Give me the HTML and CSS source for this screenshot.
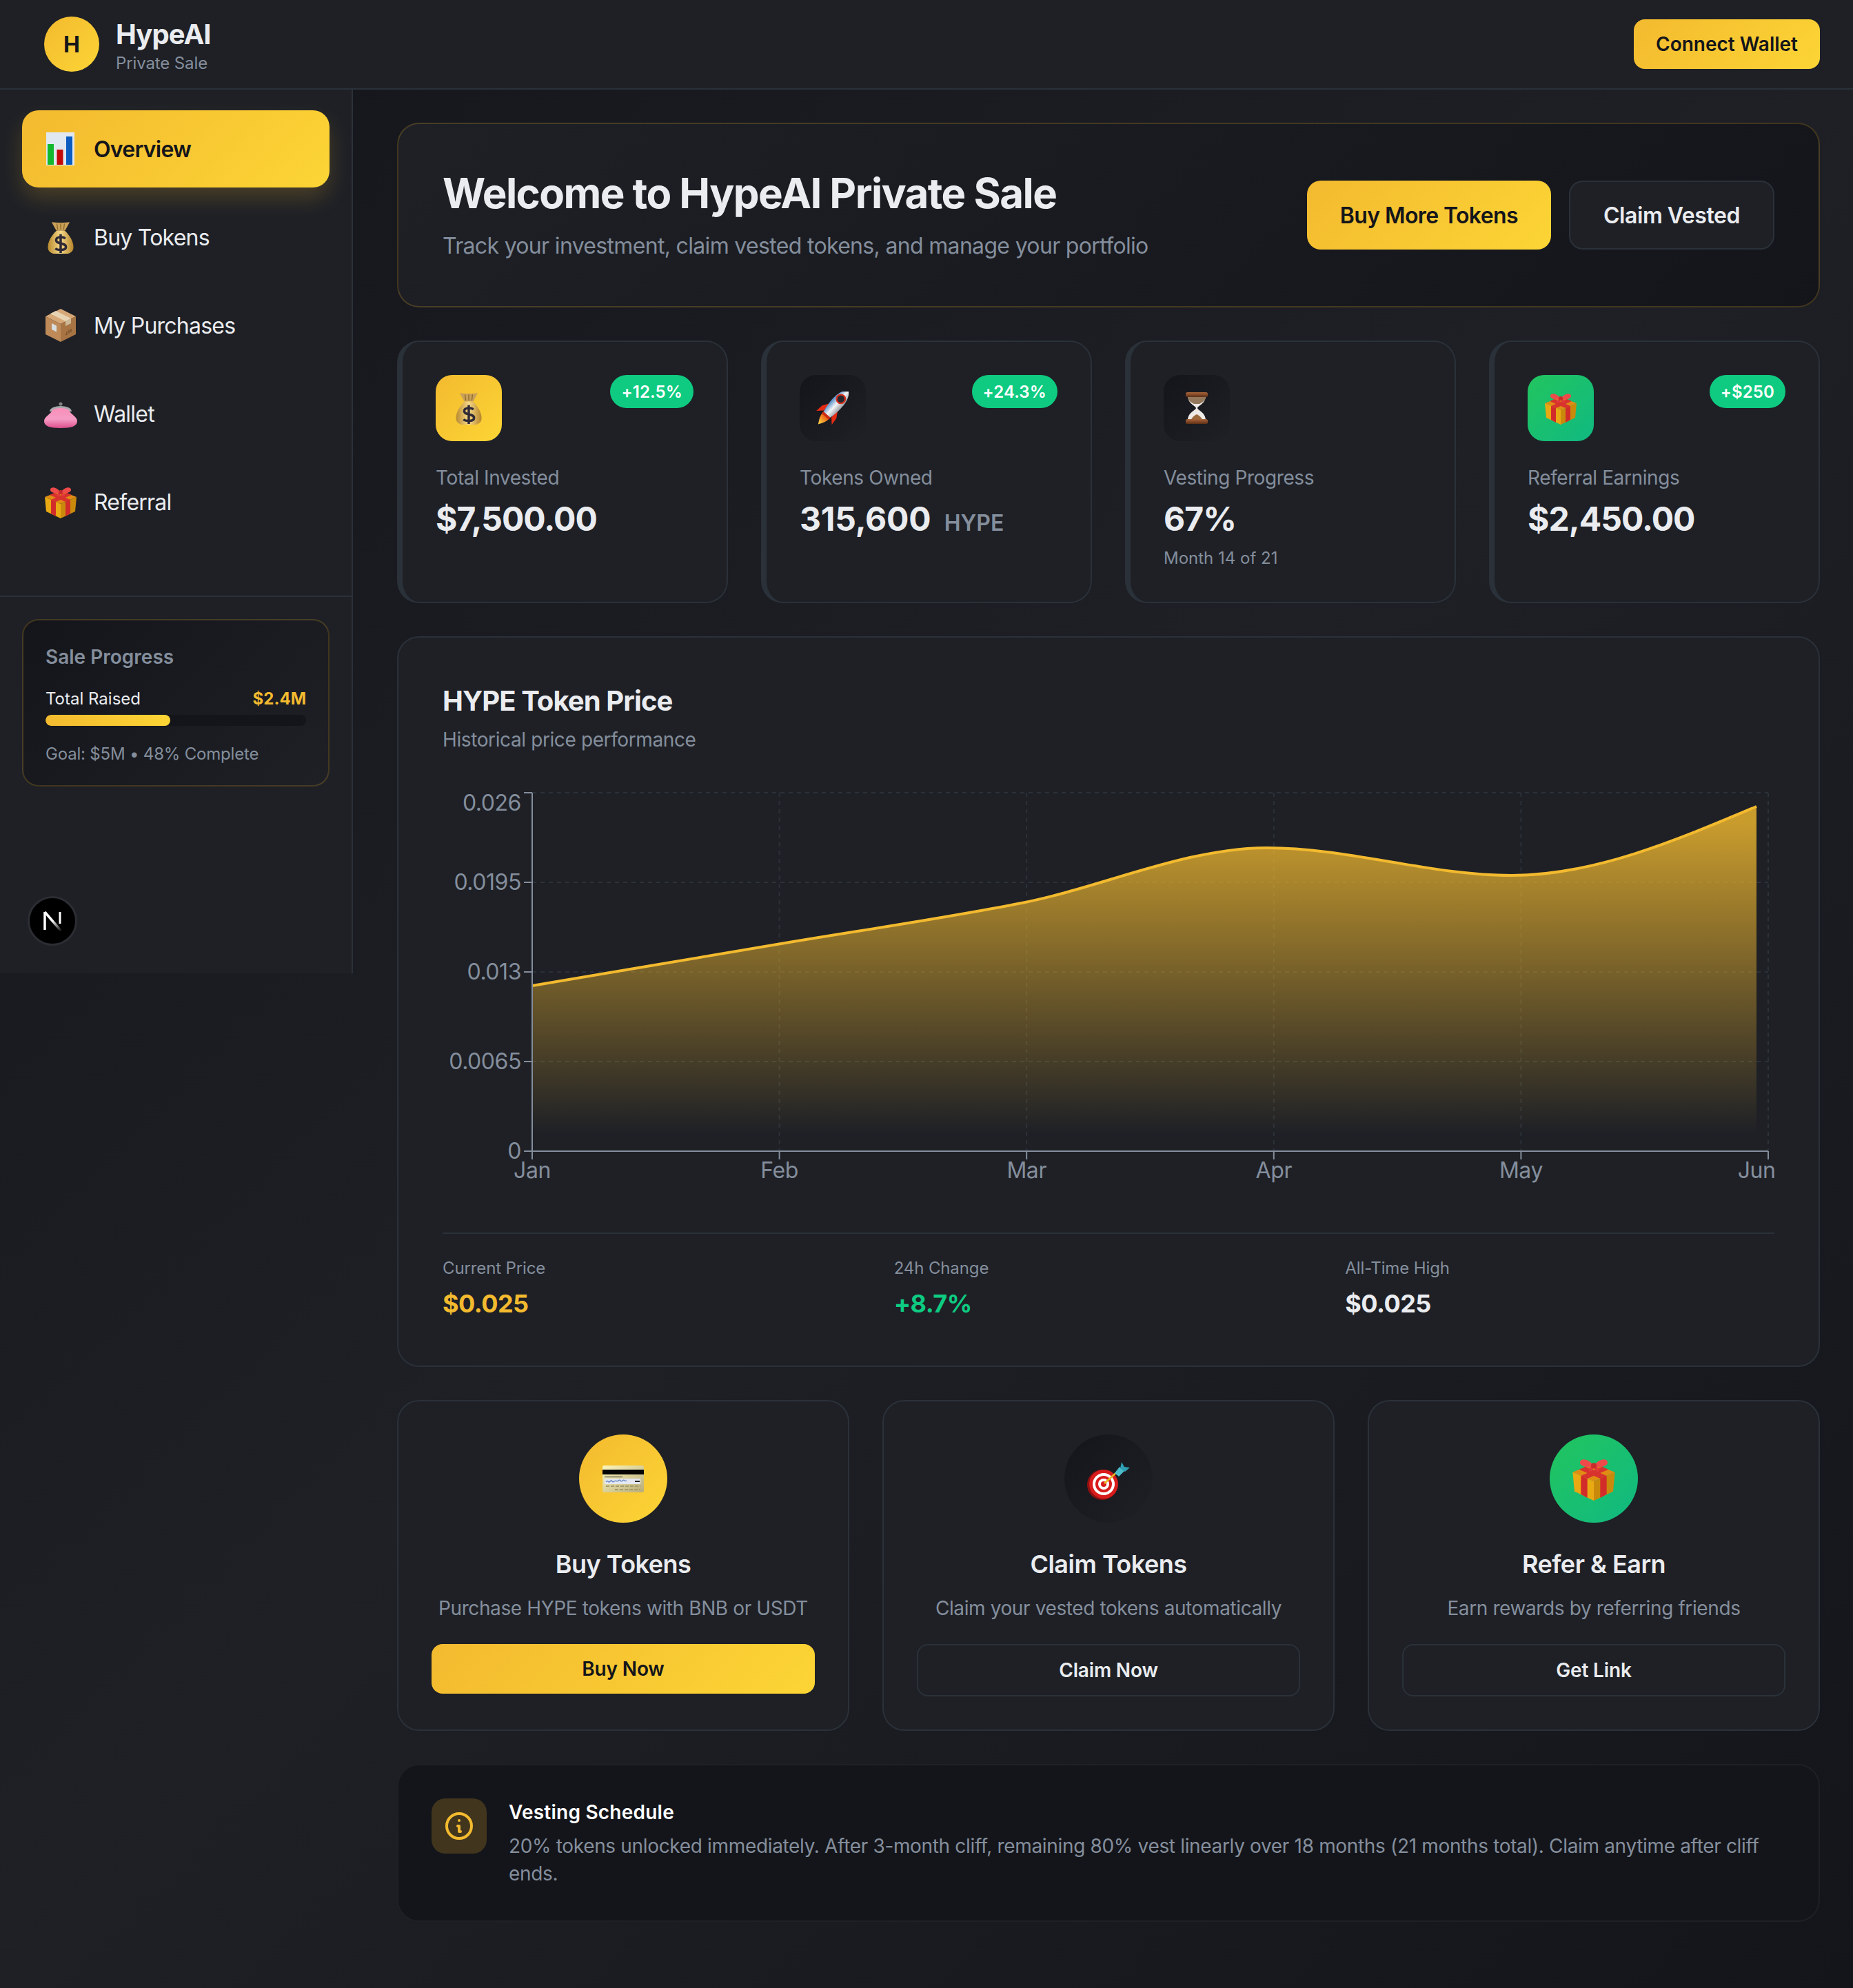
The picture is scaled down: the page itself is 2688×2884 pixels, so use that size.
FILE: index.html
```html
<!DOCTYPE html>
<html lang="en">
<head>
    <meta charset="UTF-8">
    <meta name="viewport" content="width=device-width, initial-scale=1.0">
    <title>HypeAI Private Sale</title>
    <link rel="stylesheet" href="styles.css">
</head>
<body>
    <!-- emoji drawings, reused below -->
    <svg class="defs" width="0" height="0" aria-hidden="true">
        <defs>
            <linearGradient id="bagFill" x1="0" y1="0" x2="1" y2="0">
                <stop offset="0" stop-color="#b98a2e"/>
                <stop offset=".5" stop-color="#f6d888"/>
                <stop offset="1" stop-color="#b5842a"/>
            </linearGradient>
            <linearGradient id="purseFill" x1="0" y1="0" x2="0" y2="1">
                <stop offset="0" stop-color="#f88fbb"/>
                <stop offset=".55" stop-color="#f69cc4"/>
                <stop offset="1" stop-color="#dd4f8e"/>
            </linearGradient>
            <linearGradient id="rocketBody" x1="0" y1="0" x2="1" y2="0">
                <stop offset="0" stop-color="#4f88c4"/>
                <stop offset=".5" stop-color="#f4f6f8"/>
                <stop offset="1" stop-color="#9a9da3"/>
            </linearGradient>
            <linearGradient id="flame" x1="0" y1="0" x2="0" y2="1">
                <stop offset="0" stop-color="#e85a10"/>
                <stop offset="1" stop-color="#ffe14a"/>
            </linearGradient>
            <linearGradient id="woodCap" x1="0" y1="0" x2="0" y2="1">
                <stop offset="0" stop-color="#a9653a"/>
                <stop offset="1" stop-color="#5e2f16"/>
            </linearGradient>
            <linearGradient id="cardFill" x1="0" y1="0" x2="1" y2="1">
                <stop offset="0" stop-color="#fdf6bc"/>
                <stop offset="1" stop-color="#b8ad7a"/>
            </linearGradient>
            <linearGradient id="nFade" gradientUnits="userSpaceOnUse" x1="7" y1="5" x2="31" y2="33">
                <stop offset=".45" stop-color="#fff"/>
                <stop offset="1" stop-color="#fff" stop-opacity="0"/>
            </linearGradient>
            <symbol id="e-chart" viewBox="0 0 48 48">
                <rect x="3" y="0" width="41" height="48" fill="#dfe8f0"/>
                <rect x="5" y="17" width="9" height="30" fill="#12b82e"/>
                <rect x="18.500" y="25" width="9" height="22" fill="#c40808"/>
                <rect x="32" y="6" width="9" height="41" fill="#0a5cc0"/>
            </symbol>
            <symbol id="e-bag" viewBox="2 1 44 44">
                <path d="M19 14C12 20 7 29 7 36c0 8 7 10 17 10s17-2 17-10c0-7-5-16-12-22z" fill="url(#bagFill)"/>
                <path d="M12 3c5 1 19 1 24 0l-6 11H18z" fill="#c9a058"/>
                <path d="M19 5l1 8M24 5v8M29 5l-1 8" stroke="#8d6a2c" stroke-width="1.200" fill="none"/>
                <path d="M30 25c-2-3-12-3-12 2 0 6 13 3 13 9 0 5-11 5-14 2M24 19v25" stroke="#2f2a36" stroke-width="3.200" fill="none"/>
            </symbol>
            <symbol id="e-box" viewBox="0 0 48 48">
                <path d="M24 0l22 11-22 11L2 11z" fill="#d6a878"/>
                <path d="M2 11l22 11v26L2 37z" fill="#bd8a58"/>
                <path d="M46 11L24 22v26l22-11z" fill="#a87444"/>
                <path d="M9 7l8-4 22 11-8 4z" fill="#e8d4b4"/>
                <path d="M31 18l8-4v7l-8 4z" fill="#cdb898"/>
                <path d="M11 21l7 3.500v9L11 30z" fill="#d8dde0"/>
                <path d="M31 38l2-1v-4M36 35.500v-5M39 34v-5" stroke="#6e4a28" stroke-width="1.200" fill="none"/>
            </symbol>
            <symbol id="e-purse" viewBox="0 0 48 48">
                <path d="M10 21c0-8 28-8 28 0" stroke="#a8a8aa" stroke-width="4" fill="none"/>
                <circle cx="24" cy="10" r="2.600" fill="#80807f"/>
                <path d="M12 19c4-4 20-4 24 0 2 6 12 9 12 16 0 7-8 10-24 10S0 42 0 35c0-7 10-10 12-16z" fill="url(#purseFill)"/>
            </symbol>
            <symbol id="e-gift" viewBox="0 0 48 48">
                <path d="M24 8l23 9-23 10L1 17z" fill="#e08c14"/>
                <path d="M1 17l23 10v21L3 38z" fill="#e9a912"/>
                <path d="M47 17L24 27v21l21-10z" fill="#c98a0c"/>
                <path d="M8 14l23 10 7-3L15 11zM33 11L10 21l7 3 23-10z" fill="#d8322e"/>
                <path d="M10 21l7 3v21l-7-4zM38 21l-7 3v21l7-4z" fill="#d22c2a"/>
                <path d="M24 10C19 3 10 1 9 6c-1 4 8 7 15 5 7 2 16-1 15-5-1-5-10-3-15 4z" fill="#ee4a4a"/>
                <path d="M24 10l-5 6M24 10l5 6" stroke="#e03a3a" stroke-width="3.500"/>
                <circle cx="24" cy="10" r="3" fill="#c92a2a"/>
            </symbol>
            <symbol id="e-rocket" viewBox="5 5 38 38" overflow="visible">
                <g transform="rotate(42 24 24)">
                    <path d="M13 30l5-8v11l-6 6zM35 30l-5-8v11l6 6z" fill="#e52a12"/>
                    <path d="M19 36c0 6 3 9 5 13 2-4 5-7 5-13z" fill="url(#flame)"/>
                    <path d="M24-3c7 5 8 16 7 26-.3 4-1 8-2 12H19c-1-4-1.700-8-2-12-1-10 0-21 7-26z" fill="url(#rocketBody)"/>
                    <circle cx="24" cy="10" r="5" fill="#26282e" stroke="#d8301f" stroke-width="1.800"/>
                    <path d="M18.500 34h11v3h-11z" fill="#cc2a14"/>
                </g>
            </symbol>
            <symbol id="e-glass" viewBox="0 0 48 48">
                <path d="M11 6c0 12 11 14 12 18-1 4-12 6-12 18h26c0-12-11-14-12-18 1-4 12-6 12-18z" fill="#eeebe7"/>
                <path d="M11 7c0 7 6 9 9 11h8c3-2 9-4 9-11z" fill="#93785c"/>
                <path d="M15 42c3-6 7-8 9-9 2 1 6 3 9 9z" fill="#9c6a3c"/>
                <rect x="8" y="1" width="32" height="7" rx="2.500" fill="url(#woodCap)"/>
                <rect x="8" y="40" width="32" height="7" rx="2.500" fill="url(#woodCap)"/>
            </symbol>
            <symbol id="e-card" viewBox="0 0 64 64">
                <rect x="2" y="13" width="60" height="39" rx="2.500" fill="url(#cardFill)"/>
                <rect x="2" y="19" width="60" height="7" fill="#050505"/>
                <rect x="5" y="32" width="52" height="8" fill="#e4e7f0"/>
                <path d="M7 37c3-5 3 3 6-1s2 3 6 0 3 2 6-1 3 3 6 0 3 2 6 0" stroke="#5f84c4" stroke-width="1.300" fill="none"/>
                <rect x="5" y="29" width="26" height="1.200" fill="#5a5a50"/>
                <rect x="49" y="35" width="7" height="2" fill="#222"/>
                <path d="M7 43h50M20 48h37" stroke="#a59b6c" stroke-width="2" stroke-dasharray="5 2" fill="none"/>
            </symbol>
            <symbol id="e-dart" viewBox="0 0 64 64">
                <circle cx="23" cy="41" r="22" fill="#8f1010"/>
                <circle cx="25" cy="40" r="21" fill="#d81c1c"/>
                <circle cx="25" cy="40" r="16" fill="#fff"/>
                <circle cx="25" cy="40" r="12" fill="#d81c1c"/>
                <circle cx="25" cy="40" r="8" fill="#fff"/>
                <circle cx="25" cy="40" r="4" fill="#d81c1c"/>
                <path d="M26 39l20-18" stroke="#e8b422" stroke-width="2.500"/>
                <path d="M41 24l7-9 7 6-8 8z" fill="#4cbccb"/>
                <path d="M49 17l2-9 4 7 8 1-7 6z" fill="#2f9fb2"/>
            </symbol>
        </defs>
    </svg>

    <header class="topbar">
        <div class="brand">
            <div class="brand-logo">H</div>
            <div>
                <div class="brand-name">HypeAI</div>
                <div class="brand-sub">Private Sale</div>
            </div>
        </div>
        <button class="btn btn-gold btn-small">Connect Wallet</button>
    </header>

    <div class="layout">
        <aside class="sidebar">
            <nav class="nav">
                <a class="nav-item active"><svg class="emoji-48"><use href="#e-chart"/></svg>Overview</a>
                <a class="nav-item"><svg class="emoji-48"><use href="#e-bag"/></svg>Buy Tokens</a>
                <a class="nav-item"><svg class="emoji-48"><use href="#e-box"/></svg>My Purchases</a>
                <a class="nav-item"><svg class="emoji-48"><use href="#e-purse"/></svg>Wallet</a>
                <a class="nav-item"><svg class="emoji-48"><use href="#e-gift"/></svg>Referral</a>
            </nav>
            <div class="sale-wrap">
                <div class="sale-card">
                    <div class="sale-title">Sale Progress</div>
                    <div class="sale-row">
                        <span>Total Raised</span>
                        <span class="sale-amount">$2.4M</span>
                    </div>
                    <div class="bar"><div class="bar-fill" style="width: 48%"></div></div>
                    <div class="sale-goal">Goal: $5M • 48% Complete</div>
                </div>
            </div>
        </aside>

        <main class="main">
            <section class="hero">
                <div>
                    <h1>Welcome to HypeAI Private Sale</h1>
                    <p>Track your investment, claim vested tokens, and manage your portfolio</p>
                </div>
                <div class="hero-actions">
                    <button class="btn btn-gold btn-large">Buy More Tokens</button>
                    <button class="btn btn-dark btn-large">Claim Vested</button>
                </div>
            </section>

            <section class="stats">
                <div class="stat">
                    <div class="stat-top">
                        <div class="stat-icon gold"><svg class="emoji-48"><use href="#e-bag"/></svg></div>
                        <span class="pill">+12.5%</span>
                    </div>
                    <div class="stat-label">Total Invested</div>
                    <div class="stat-value">$7,500.00</div>
                </div>
                <div class="stat">
                    <div class="stat-top">
                        <div class="stat-icon dark"><svg class="emoji-48"><use href="#e-rocket"/></svg></div>
                        <span class="pill">+24.3%</span>
                    </div>
                    <div class="stat-label">Tokens Owned</div>
                    <div class="stat-value tokens">315,600 <small>HYPE</small></div>
                </div>
                <div class="stat">
                    <div class="stat-top">
                        <div class="stat-icon dark"><svg class="emoji-48"><use href="#e-glass"/></svg></div>
                    </div>
                    <div class="stat-label">Vesting Progress</div>
                    <div class="stat-value">67%</div>
                    <div class="stat-note">Month 14 of 21</div>
                </div>
                <div class="stat">
                    <div class="stat-top">
                        <div class="stat-icon green"><svg class="emoji-48"><use href="#e-gift"/></svg></div>
                        <span class="pill">+$250</span>
                    </div>
                    <div class="stat-label">Referral Earnings</div>
                    <div class="stat-value">$2,450.00</div>
                </div>
            </section>

            <section class="chart-card">
                <h2>HYPE Token Price</h2>
                <p class="chart-sub">Historical price performance</p>
                <svg class="chart" width="1932" height="600" viewBox="642 1140 1932 600">
                    <defs>
                        <linearGradient id="areaFill" x1="0" y1="0" x2="0" y2="1">
                            <stop offset="0.05" stop-color="#f3ba2f" stop-opacity="0.8"/>
                            <stop offset="0.95" stop-color="#f3ba2f" stop-opacity="0"/>
                        </linearGradient>
                    </defs>
                    <g class="grid">
                        <path d="M772 1150H2565M772 1280H2565M772 1410H2565M772 1540H2565"/>
                        <path d="M1130.600 1150V1670M1489.200 1150V1670M1847.800 1150V1670M2206.400 1150V1670M2565 1150V1670"/>
                    </g>
                    <path class="area" d="M772 1430C890.400 1410 1008.600 1390 1127 1370C1245.400 1350 1363.600 1333.300 1482 1310C1600.400 1286.700 1719.600 1230 1838 1230C1956.400 1230 2074.600 1270 2193 1270C2311.400 1270 2429.600 1220 2548 1170V1670H772Z"/>
                    <path class="line" d="M772 1430C890.400 1410 1008.600 1390 1127 1370C1245.400 1350 1363.600 1333.300 1482 1310C1600.400 1286.700 1719.600 1230 1838 1230C1956.400 1230 2074.600 1270 2193 1270C2311.400 1270 2429.600 1220 2548 1170"/>
                    <g class="axis">
                        <path d="M772 1150V1670H2565"/>
                        <path d="M760 1150H772M760 1280H772M760 1410H772M760 1540H772M760 1670H772"/>
                        <path d="M772 1670V1682M1130.600 1670V1682M1489.200 1670V1682M1847.800 1670V1682M2206.400 1670V1682M2565 1670V1682"/>
                    </g>
                    <g class="y-labels">
                        <text x="756" y="1176">0.026</text>
                        <text x="756" y="1291">0.0195</text>
                        <text x="756" y="1421">0.013</text>
                        <text x="756" y="1551">0.0065</text>
                        <text x="756" y="1681">0</text>
                    </g>
                    <g class="x-labels">
                        <text x="772" y="1709">Jan</text>
                        <text x="1130.600" y="1709">Feb</text>
                        <text x="1489.200" y="1709">Mar</text>
                        <text x="1847.800" y="1709">Apr</text>
                        <text x="2206.400" y="1709">May</text>
                        <text x="2548" y="1709">Jun</text>
                    </g>
                </svg>
                <div class="price-row">
                    <div>
                        <div class="price-label">Current Price</div>
                        <div class="price-value text-gold">$0.025</div>
                    </div>
                    <div>
                        <div class="price-label">24h Change</div>
                        <div class="price-value text-green">+8.7%</div>
                    </div>
                    <div>
                        <div class="price-label">All-Time High</div>
                        <div class="price-value">$0.025</div>
                    </div>
                </div>
            </section>

            <section class="actions">
                <div class="action">
                    <div class="action-icon gold"><svg class="emoji-64"><use href="#e-card"/></svg></div>
                    <h3>Buy Tokens</h3>
                    <p>Purchase HYPE tokens with BNB or USDT</p>
                    <button class="btn btn-gold btn-wide">Buy Now</button>
                </div>
                <div class="action">
                    <div class="action-icon dark"><svg class="emoji-64"><use href="#e-dart"/></svg></div>
                    <h3>Claim Tokens</h3>
                    <p>Claim your vested tokens automatically</p>
                    <button class="btn btn-dark btn-wide">Claim Now</button>
                </div>
                <div class="action">
                    <div class="action-icon green"><svg class="emoji-64"><use href="#e-gift"/></svg></div>
                    <h3>Refer &amp; Earn</h3>
                    <p>Earn rewards by referring friends</p>
                    <button class="btn btn-dark btn-wide">Get Link</button>
                </div>
            </section>

            <section class="notice">
                <div class="notice-icon">
                    <svg width="48" height="48" viewBox="0 0 24 24" fill="none" stroke="#f3ba2f" stroke-width="2" stroke-linecap="round" stroke-linejoin="round">
                        <path d="M13 16h-1v-4h-1m1-4h.01M21 12a9 9 0 11-18 0 9 9 0 0118 0z"/>
                    </svg>
                </div>
                <div>
                    <h4>Vesting Schedule</h4>
                    <p>20% tokens unlocked immediately. After 3-month cliff, remaining 80% vest linearly over 18 months (21 months total). Claim anytime after cliff ends.</p>
                </div>
            </section>
        </main>
    </div>

    <!-- dev tools badge floats over the sidebar -->
    <div class="next-badge">
        <svg width="36" height="36" viewBox="0 0 36 36" fill="none">
            <path d="M7 31V5" stroke="#fff" stroke-width="3.500"/>
            <path d="M7 5l24 28" stroke="url(#nFade)" stroke-width="3.500"/>
            <path d="M29 5v17" stroke="#fff" stroke-width="3"/>
        </svg>
    </div>
</body>
</html>
```

FILE: styles.css
```css
* {
    box-sizing: border-box;
}

body {
    margin: 0;
    min-height: 2884px;
    position: relative;
    font-family: Inter, "Noto Sans", Arial, sans-serif;
    color: #eaecef;
    background: linear-gradient(135deg, #14151a 0%, #1e2026 50%, #14151a 100%);
}

h1, h2, h3, h4, p {
    margin: 0;
}

.defs {
    position: absolute;
}

.text-gold { color: #f3ba2f; }
.text-green { color: #0ecb81; }

.gold { background: linear-gradient(135deg, #f3ba2f, #fcd535); }
.dark { background: linear-gradient(135deg, #14151a, #1e2026); }
.green { background: linear-gradient(135deg, #22c55e, #10b981); }

.emoji-48 { width: 48px; height: 48px; flex: none; }
.emoji-64 { width: 64px; height: 64px; flex: none; }

/* top bar */
.topbar {
    height: 130px;
    padding: 0 48px 0 64px;
    display: flex;
    justify-content: space-between;
    align-items: center;
    background: #1e2026;
    border-bottom: 2px solid #2b3139;
}

.brand {
    display: flex;
    align-items: center;
    gap: 24px;
}

.brand-logo {
    width: 80px;
    height: 80px;
    border-radius: 50%;
    background: linear-gradient(135deg, #f3ba2f, #fcd535);
    color: #14151a;
    font-size: 32px;
    font-weight: 700;
    display: flex;
    align-items: center;
    justify-content: center;
}

.brand-name {
    font-size: 40px;
    font-weight: 700;
    line-height: 56px;
    letter-spacing: -0.023em;
}

.brand-sub {
    font-size: 24px;
    line-height: 28px;
    color: #848e9c;
    letter-spacing: -0.005em;
}

/* buttons */
.btn {
    font-family: inherit;
    font-weight: 600;
    cursor: pointer;
    border: none;
}

.btn-gold {
    background: linear-gradient(135deg, #f3ba2f, #fcd535);
    color: #14151a;
}

.btn-dark {
    background: #1e2026;
    border: 2px solid #2b3139;
    color: #eaecef;
}

.btn-small {
    height: 72px;
    padding: 0 32px;
    font-size: 28px;
    border-radius: 16px;
}

.btn-large {
    height: 100px;
    padding: 0 48px;
    font-size: 32px;
    border-radius: 20px;
    letter-spacing: -0.019em;
}

.btn-large.btn-dark {
    letter-spacing: -0.014em;
}

.btn-wide {
    display: block;
    width: 100%;
    height: 72px;
    font-size: 28px;
    border-radius: 16px;
    letter-spacing: -0.006em;
}

.btn-wide.btn-dark {
    height: 76px;
}

/* sidebar */
.layout {
    display: flex;
    align-items: flex-start;
}

.sidebar {
    width: 512px;
    height: 1282px;
    flex: none;
    background: #1e2026;
    border-right: 2px solid #2b3139;
}

.nav {
    height: 736px;
    padding: 30px 32px 0;
    display: flex;
    flex-direction: column;
    gap: 16px;
    border-bottom: 2px solid #2b3139;
}

.nav-item {
    height: 112px;
    padding: 0 32px;
    display: flex;
    align-items: center;
    gap: 24px;
    font-size: 32px;
    color: #eaecef;
    border-radius: 24px;
    letter-spacing: -0.024em;
}

.nav-item.active {
    background: linear-gradient(135deg, #f3ba2f, #fcd535);
    color: #14151a;
    font-weight: 600;
    box-shadow: 0 16px 32px rgba(243, 186, 47, 0.2);
}

.sale-wrap {
    padding: 32px;
}

.sale-card {
    height: 243px;
    padding: 34px 32px 0;
    border: 2px solid rgba(243, 186, 47, 0.2);
    border-radius: 24px;
    background: linear-gradient(135deg, #14151a, #1e2026);
}

.sale-title {
    font-size: 28px;
    line-height: 38px;
    font-weight: 600;
    color: #848e9c;
}

.sale-row {
    margin-top: 26px;
    display: flex;
    justify-content: space-between;
    font-size: 24px;
    line-height: 32px;
}

.sale-amount {
    font-weight: 700;
    color: #f3ba2f;
}

.bar {
    margin-top: 7px;
    height: 16px;
    border-radius: 8px;
    background: #14151a;
    overflow: hidden;
}

.bar-fill {
    height: 100%;
    border-radius: 8px;
    background: linear-gradient(90deg, #f3ba2f, #fcd535);
}

.sale-goal {
    margin-top: 25px;
    font-size: 24px;
    line-height: 32px;
    color: #848e9c;
    letter-spacing: -0.008em;
}

.next-badge {
    position: absolute;
    left: 40px;
    top: 1300px;
    width: 72px;
    height: 72px;
    border-radius: 50%;
    background: #000;
    border: 3px solid #2b2d33;
    display: flex;
    align-items: center;
    justify-content: center;
}

/* main column */
.main {
    flex: 1;
    min-width: 0;
    padding: 48px 48px 96px 64px;
    display: flex;
    flex-direction: column;
    gap: 48px;
}

.hero {
    height: 268px;
    padding: 0 64px;
    display: flex;
    justify-content: space-between;
    align-items: center;
    border: 2px solid rgba(243, 186, 47, 0.2);
    border-radius: 32px;
    background: linear-gradient(135deg, #1e2026, #14151a);
}

.hero h1 {
    font-size: 60px;
    line-height: 72px;
    font-weight: 700;
    letter-spacing: -0.026em;
}

.hero p {
    margin-top: 17px;
    font-size: 32px;
    line-height: 48px;
    color: #848e9c;
    letter-spacing: -0.021em;
}

.hero-actions {
    display: flex;
    gap: 26px;
}

/* stat cards */
.stats {
    display: grid;
    grid-template-columns: repeat(4, 1fr);
    gap: 48px;
}

.stat {
    padding: 48px;
    height: 381px;
    background: #1e2026;
    border: 2px solid #2b3139;
    border-left-width: 8px;
    border-radius: 32px;
}

.stat-top {
    display: flex;
    justify-content: space-between;
    align-items: flex-start;
    margin-bottom: 33px;
}

.stat-icon {
    width: 96px;
    height: 96px;
    border-radius: 24px;
    display: flex;
    align-items: center;
    justify-content: center;
}

.pill {
    height: 48px;
    padding: 0 16px;
    display: flex;
    align-items: center;
    font-size: 24px;
    font-weight: 600;
    color: #fff;
    background: #0ecb81;
    border-radius: 24px;
    letter-spacing: 0.005em;
}

.stat-label {
    font-size: 28px;
    line-height: 40px;
    color: #848e9c;
    letter-spacing: -0.014em;
}

.stat-value {
    margin-top: 12px;
    font-size: 48px;
    line-height: 56px;
    font-weight: 700;
    letter-spacing: -0.02em;
}

.stat-value.tokens {
    letter-spacing: -0.004em;
}

.stat-value small {
    margin-left: 8px;
    font-size: 32px;
    font-weight: 600;
    color: #848e9c;
    letter-spacing: 0;
}

.stat-note {
    margin-top: 13px;
    font-size: 24px;
    line-height: 32px;
    color: #848e9c;
}

/* price chart */
.chart-card {
    padding: 64px;
    background: #1e2026;
    border: 2px solid #2b3139;
    border-radius: 32px;
}

.chart-card h2 {
    font-size: 40px;
    line-height: 56px;
    font-weight: 700;
    letter-spacing: -0.023em;
}

.chart-sub {
    margin-top: 8px;
    margin-bottom: 47px;
    font-size: 28px;
    line-height: 40px;
    color: #848e9c;
    letter-spacing: -0.014em;
}

.chart {
    display: block;
    overflow: visible;
}

.grid path {
    fill: none;
    stroke: #2b3139;
    stroke-width: 2;
    stroke-dasharray: 6 6;
}

.area {
    fill: url(#areaFill);
}

.line {
    fill: none;
    stroke: #f3ba2f;
    stroke-width: 4;
}

.axis path {
    fill: none;
    stroke: #848e9c;
    stroke-width: 2;
}

.y-labels text,
.x-labels text {
    font-size: 32px;
    fill: #848e9c;
    letter-spacing: -0.014em;
}

.y-labels text {
    text-anchor: end;
}

.x-labels text {
    text-anchor: middle;
}

.price-row {
    margin-top: 48px;
    padding-top: 32px;
    border-top: 2px solid #2b3139;
    display: grid;
    grid-template-columns: repeat(3, 1fr);
    gap: 32px;
}

.price-label {
    font-size: 24px;
    line-height: 36px;
    color: #848e9c;
    letter-spacing: -0.005em;
}

.price-value {
    margin-top: 7px;
    font-size: 36px;
    line-height: 52px;
    font-weight: 700;
    letter-spacing: -0.015em;
}

/* quick actions */
.actions {
    display: grid;
    grid-template-columns: repeat(3, 1fr);
    gap: 48px;
}

.action {
    padding: 48px;
    text-align: center;
    background: #1e2026;
    border: 2px solid #2b3139;
    border-radius: 32px;
}

.action-icon {
    width: 128px;
    height: 128px;
    margin: 0 auto;
    border-radius: 50%;
    display: flex;
    align-items: center;
    justify-content: center;
}

.action h3 {
    margin-top: 36px;
    font-size: 36px;
    line-height: 48px;
    font-weight: 600;
    letter-spacing: -0.014em;
}

.action p {
    margin-top: 18px;
    margin-bottom: 30px;
    font-size: 28px;
    line-height: 44px;
    color: #848e9c;
    letter-spacing: -0.014em;
}

/* vesting note */
.notice {
    padding: 48px;
    display: flex;
    gap: 32px;
    background: #14151a;
    border: 2px solid #1e2026;
    border-radius: 32px;
}

.notice-icon {
    width: 80px;
    height: 80px;
    flex: none;
    border-radius: 20px;
    background: rgba(243, 186, 47, 0.2);
    display: flex;
    align-items: center;
    justify-content: center;
}

.notice h4 {
    font-size: 28px;
    line-height: 40px;
    font-weight: 600;
    color: #fff;
    letter-spacing: 0.008em;
}

.notice p {
    margin-top: 9px;
    font-size: 28px;
    line-height: 40px;
    color: #848e9c;
    letter-spacing: -0.012em;
}
```
